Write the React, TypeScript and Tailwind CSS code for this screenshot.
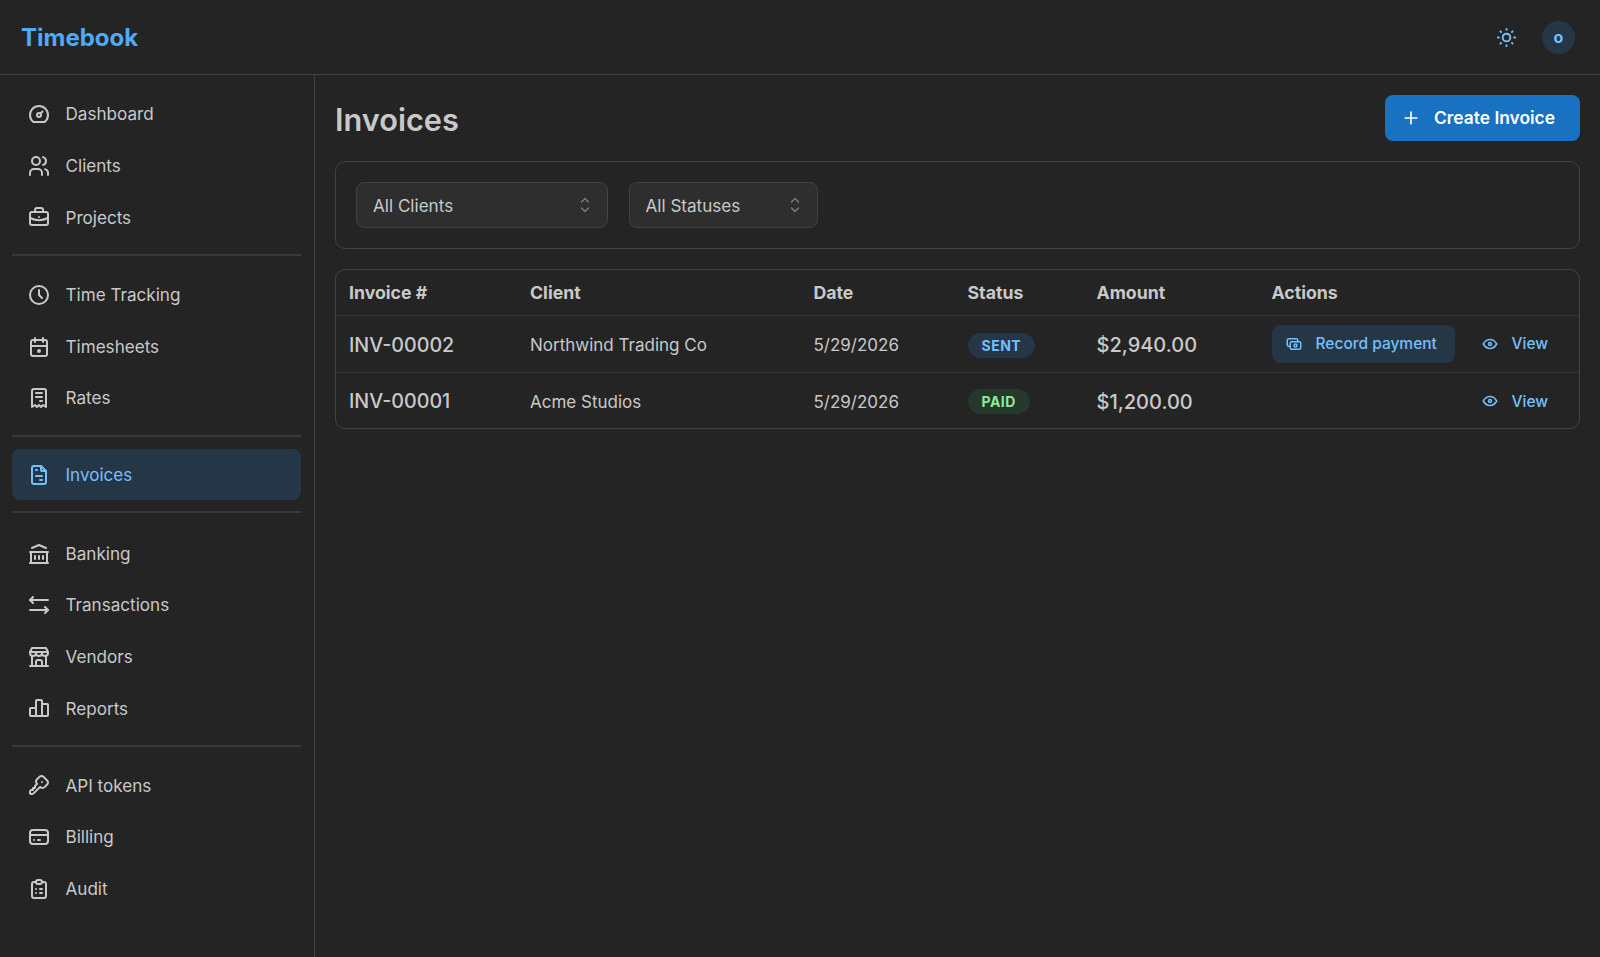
import React from "react";
import {
  TbDashboard, TbUsers, TbBriefcase, TbClock, TbCalendarDue, TbReceipt, TbFileInvoice, TbBuildingBank,
  TbArrowsLeftRight, TbBuildingStore, TbChartBar, TbKey, TbCreditCard, TbClipboardList, TbSun, TbPlus,
  TbEye, TbCash,
} from "react-icons/tb";

const groups = [
  [["Dashboard", TbDashboard], ["Clients", TbUsers], ["Projects", TbBriefcase]],
  [["Time Tracking", TbClock], ["Timesheets", TbCalendarDue], ["Rates", TbReceipt]],
  [["Invoices", TbFileInvoice]],
  [["Banking", TbBuildingBank], ["Transactions", TbArrowsLeftRight], ["Vendors", TbBuildingStore], ["Reports", TbChartBar]],
  [["API tokens", TbKey], ["Billing", TbCreditCard], ["Audit", TbClipboardList]],
] as [string, React.ComponentType<{ size?: number; strokeWidth?: number; className?: string }>][][];

const dividerClass = [
  "",
  "mt-[10.5px] mb-[13.4px]",
  "mt-[11.5px] mb-[11.8px]",
  "mt-[11px] mb-[14.5px]",
  "mt-[10.5px] mb-[13px]",
];

function Select({ label, width }: { label: string; width: string }) {
  return (
    <div className={`${width} h-[46px] flex items-center justify-between pl-[16px] pr-[17px] rounded-[8px] border border-[#424242] bg-[#2e2e2e] text-[17.1px] text-[#c9c9c9]`}>
      <span className="pt-[2px]">{label}</span>
      <svg width="10" height="16" viewBox="0 0 10 16" fill="none" stroke="#828282" strokeWidth="1.2" strokeLinecap="round" strokeLinejoin="round" className="mb-[1px]">
        <path d="M1.5 5L5 1.5L8.5 5" />
        <path d="M1.5 11L5 14.5L8.5 11" />
      </svg>
    </div>
  );
}

function View() {
  return (
    <span className="flex items-center text-[15.5px] font-medium text-[#74c0fc] gap-[13px]">
      <TbEye size={18} strokeWidth={2} />
      View
    </span>
  );
}

const th = "text-left font-bold text-[17.7px] text-[#c9c9c9] px-[13px] pt-[2px] h-[45px] border-b border-[#383838]";
const td = "px-[13px] text-[#c9c9c9]";
const tx = "px-[13px] pt-[3px] text-[#c9c9c9]";
const ty = "px-[13px] pt-[4px] text-[#c9c9c9]";

export default function App() {
  return (
    <div className="w-[1600px] h-[957px] overflow-hidden bg-[#242424] text-[#c9c9c9] font-['Inter',sans-serif] flex flex-col">
      <header className="h-[75px] shrink-0 border-b border-[#424242] flex items-center justify-between pl-[21px] pr-[25px]">
        <span className="text-[24px] font-bold text-[#4dabf7] pt-[2px]">Timebook</span>
        <div className="flex items-center gap-[24px]">
          <TbSun size={23} strokeWidth={2} className="text-[#74c0fc]" />
          <div className="w-[33px] h-[33px] rounded-full bg-[#253647] flex items-center justify-center text-[#74c0fc] text-[16px] font-bold">o</div>
        </div>
      </header>
      <div className="flex-1 flex min-h-0">
        <aside className="w-[315px] shrink-0 border-r border-[#424242] pt-[13.5px] pl-[12px] pr-[13px]">
          {groups.map((g, i) => (
            <div key={i}>
              {i > 0 && <div className={`h-[2px] bg-[#383838] ${dividerClass[i]}`} />}
              {g.map(([label, Icon]) => {
                const active = label === "Invoices";
                return (
                  <div key={label} className={`flex items-center pl-[15px] rounded-[8px] text-[17.1px] ${active ? "h-[51px] bg-[#253647] text-[#74c0fc]" : "h-[51.6px] text-[#c9c9c9]"}`}>
                    <Icon size={24} strokeWidth={2} className={active ? "text-[#74c0fc]" : "text-[#c9c9c9]"} />
                    <span className="ml-[14.5px]">{label}</span>
                  </div>
                );
              })}
            </div>
          ))}
        </aside>
        <main className="flex-1 pl-[20px] pr-[20px] pt-[20px]">
          <div className="flex items-center justify-between h-[46px]">
            <h1 className="text-[30.7px] font-semibold text-[#c9c9c9] pt-[4px]">Invoices</h1>
            <div className="w-[195px] h-[46px] rounded-[8px] bg-[#1971c2] text-white flex items-center pl-[16px] gap-[13px] text-[17.4px] font-semibold">
              <TbPlus size={20} strokeWidth={2} />
              Create Invoice
            </div>
          </div>
          <div className="mt-[20px] h-[88px] rounded-[10px] border border-[#424242] flex items-center gap-[20.5px] pl-[20px]">
            <Select label="All Clients" width="w-[252px]" />
            <Select label="All Statuses" width="w-[189px]" />
          </div>
          <div className="mt-[20px] rounded-[10px] border border-[#424242] overflow-hidden">
            <table className="w-full table-fixed border-collapse">
              <colgroup>
                <col className="w-[181px]" />
                <col className="w-[283.5px]" />
                <col className="w-[154px]" />
                <col className="w-[129px]" />
                <col className="w-[175px]" />
                <col />
              </colgroup>
              <thead>
                <tr>
                  <th className={th}>Invoice #</th>
                  <th className={th}>Client</th>
                  <th className={th}>Date</th>
                  <th className={th}>Status</th>
                  <th className={th}>Amount</th>
                  <th className={th}>Actions</th>
                </tr>
              </thead>
              <tbody>
                <tr className="h-[57px] border-b border-[#383838]">
                  <td className={`${ty} text-[19.7px] font-medium`}>INV-00002</td>
                  <td className={`${ty} text-[17px]`}>Northwind Trading Co</td>
                  <td className={`${ty} text-[17px]`}>5/29/2026</td>
                  <td className={tx}>
                    <span className="inline-flex items-center h-[25px] px-[14px] rounded-full bg-[#253647] text-[#74c0fc] text-[14px] font-bold tracking-[0.5px]">SENT</span>
                  </td>
                  <td className={`${tx} text-[20px] font-medium`}>$2,940.00</td>
                  <td className={td}>
                    <div className="flex items-center">
                      <span className="w-[183px] h-[38px] rounded-[8px] bg-[#253647] text-[#74c0fc] flex items-center pl-[13px] gap-[13px] text-[15.5px] font-medium">
                        <TbCash size={18} strokeWidth={2} />
                        Record payment
                      </span>
                      <span className="ml-[26px]"><View /></span>
                    </div>
                  </td>
                </tr>
                <tr className="h-[56px]">
                  <td className={`${ty} text-[19.7px] font-medium`}>INV-00001</td>
                  <td className={`${ty} text-[17px]`}>Acme Studios</td>
                  <td className={`${ty} text-[17px]`}>5/29/2026</td>
                  <td className={tx}>
                    <span className="inline-flex items-center h-[25px] px-[14px] rounded-full bg-[#25382b] text-[#8ce99a] text-[14px] font-bold tracking-[0.5px]">PAID</span>
                  </td>
                  <td className={`${tx} text-[20px] font-medium`}>$1,200.00</td>
                  <td className={`${td} pt-[2px]`}>
                    <div className="flex items-center">
                      <span className="ml-[209px]"><View /></span>
                    </div>
                  </td>
                </tr>
              </tbody>
            </table>
          </div>
        </main>
      </div>
    </div>
  );
}
